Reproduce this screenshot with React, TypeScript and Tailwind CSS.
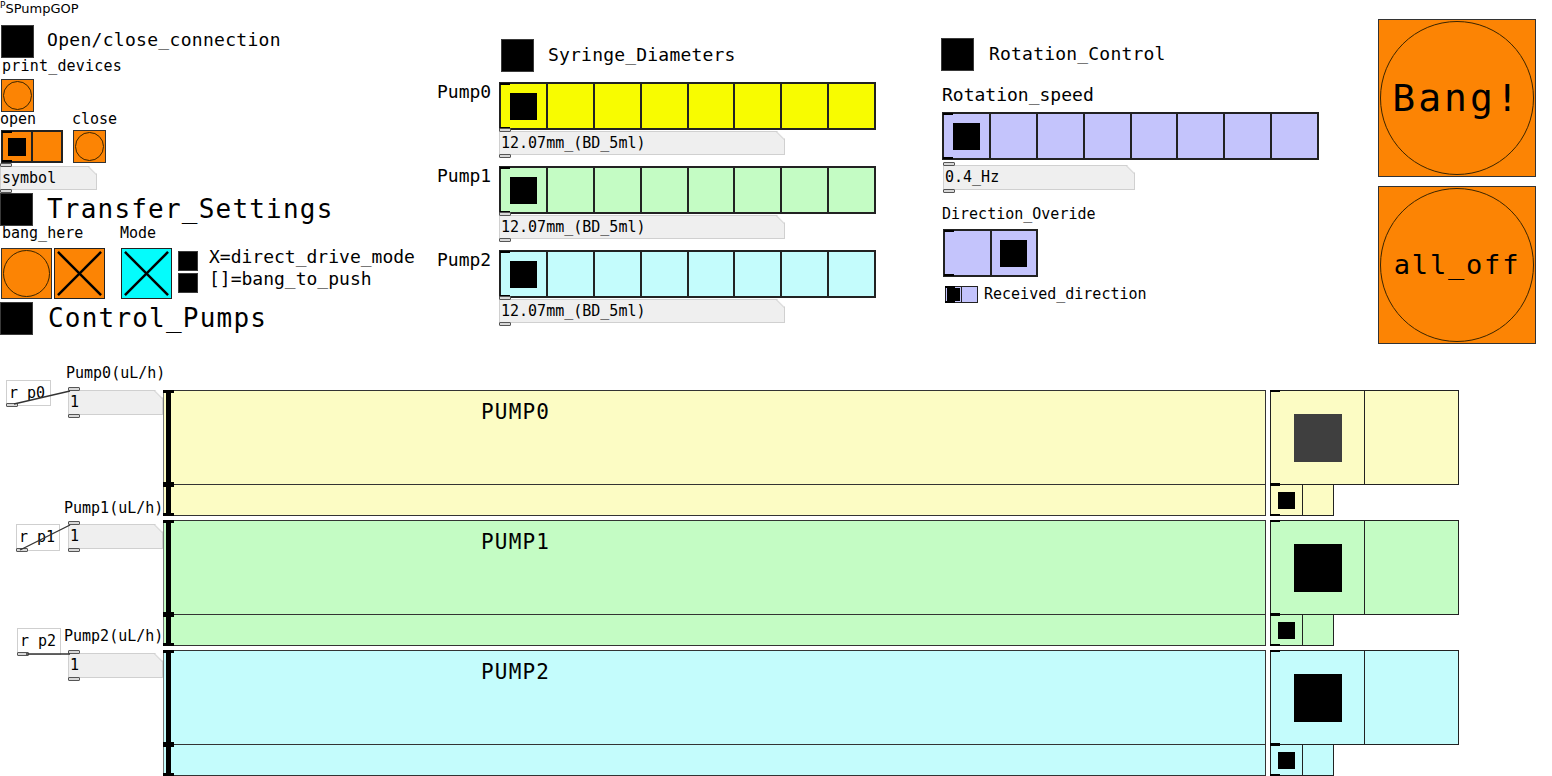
import React from "react";

function Sq({ className = "" }: { className?: string }) {
  return <div className={`shrink-0 bg-black border border-[#3a3a3a] ${className}`} />;
}

function Tab({ bottom }: { bottom?: boolean }) {
  return (
    <div
      className={`absolute left-0 w-[12px] h-[4px] rounded-[1px] border border-[#555] bg-[#d8d8d8] ${
        bottom ? "-bottom-[3px]" : "-top-[3px]"
      }`}
    />
  );
}

// gray atom box (symbol / number) with the cut corner
function Atom({ className, children }: { className: string; children: React.ReactNode }) {
  return (
    <div className={`relative shrink-0 flex items-center ${className}`}>
      <div className="absolute inset-0 border border-[#d0d0d0] bg-[#efefef] [clip-path:polygon(0_0,calc(100%_-_8px)_0,100%_8px,100%_100%,0_100%)]" />
      <svg className="absolute right-0 top-0 w-[9px] h-[9px]" viewBox="0 0 9 9">
        <line x1="0" y1="0.5" x2="8.5" y2="9" stroke="#d0d0d0" />
      </svg>
      <span className="relative pl-[2px] text-[15px] leading-none">{children}</span>
      <Tab />
      <Tab bottom />
    </div>
  );
}

function Radio({
  n,
  sel,
  className,
  knob,
  thick,
}: {
  n: number;
  sel: number;
  className: string;
  knob: string;
  thick?: boolean;
}) {
  return (
    <div className={`relative shrink-0 flex border-[#222] ${thick ? "border-2" : "border"} ${className}`}>
      {Array.from({ length: n }, (_, i) => (
        <div
          key={i}
          className={`flex-1 flex items-center justify-center border-[#222] first:border-l-0 ${
            thick ? "border-l-2" : "border-l"
          }`}
        >
          {i === sel && <div className={knob} />}
        </div>
      ))}
      <div className="absolute -left-px -top-px w-[10px] h-[2px] bg-black" />
      <div className="absolute -left-px -bottom-px w-[10px] h-[2px] bg-black" />
    </div>
  );
}

function Bang({ className, children }: { className: string; children?: React.ReactNode }) {
  return (
    <div className={`relative shrink-0 bg-[#fc8404] border border-[#333] flex items-center justify-center ${className}`}>
      <div className="absolute inset-[1px] rounded-full border border-[#3a2400]" />
      {children && <span className="relative">{children}</span>}
    </div>
  );
}

function Toggle({ className }: { className: string }) {
  return (
    <div className={`relative shrink-0 border border-[#222] ${className}`}>
      <svg className="absolute inset-0 w-full h-full" viewBox="0 0 50 50">
        <line x1="3" y1="3" x2="47" y2="47" stroke="black" strokeWidth="2.5" />
        <line x1="47" y1="3" x2="3" y2="47" stroke="black" strokeWidth="2.5" />
      </svg>
    </div>
  );
}

function Slider({ className, children }: { className: string; children?: React.ReactNode }) {
  return (
    <div className={`relative border border-[#333] border-l-[#777] ${className}`}>
      <div className="absolute left-[2px] -top-px -bottom-px w-[5px] bg-black" />
      <div className="absolute -left-px -top-px w-[11px] h-[3px] bg-black" />
      <div className="absolute -left-px -bottom-px w-[11px] h-[3px] bg-black" />
      {children}
    </div>
  );
}

function Recv({ className, children }: { className: string; children: React.ReactNode }) {
  return (
    <div className={`absolute flex items-center border border-[#cfcfcf] bg-white pl-[2px] text-[15px] leading-none ${className}`}>
      {children}
      <div className="absolute -left-px -bottom-[2px] w-[12px] h-[4px] rounded-[1px] border border-[#555] bg-[#d8d8d8]" />
    </div>
  );
}

function PumpRow({
  bg,
  label,
  knob,
  left,
}: {
  bg: string;
  label: string;
  knob: string;
  left: React.ReactNode;
}) {
  return (
    <div className="flex h-[126px]">
      <div className="relative w-[163px] shrink-0">{left}</div>
      <div className="w-[1103px] shrink-0 flex flex-col">
        <Slider className={`h-[95px] ${bg}`}>
          <span className="absolute left-[317px] top-[9px] text-[21px] leading-[24px] tracking-[1.2px]">{label}</span>
        </Slider>
        <Slider className={`h-[32px] -mt-px ${bg}`} />
      </div>
      <div className="ml-[4px] flex flex-col">
        <Radio n={2} sel={0} className={`w-[189px] h-[95px] ${bg}`} knob={`w-[48px] h-[48px] ${knob}`} />
        <Radio n={2} sel={0} className={`w-[64px] h-[32px] -mt-px ${bg}`} knob="w-[17px] h-[17px] bg-black" />
      </div>
    </div>
  );
}

function SyringeGroup({ name, bg }: { name: string; bg: string }) {
  return (
    <div className="flex mb-[11px]">
      <div className="w-[62px] shrink-0 text-[18px] leading-[22px] -mt-px">{name}</div>
      <div className="flex flex-col">
        <Radio n={8} sel={0} thick className={`w-[377px] h-[48px] ${bg}`} knob="w-[27px] h-[27px] bg-black" />
        <Atom className="w-[286px] h-[24px] mt-[1px]">12.07mm_(BD_5ml)</Atom>
      </div>
    </div>
  );
}

export default function App() {
  return (
    <div className="relative w-[1552px] h-[776px] overflow-hidden bg-white text-black font-['DejaVu_Sans_Mono',monospace]">
      {/* top controls */}
      <div className="flex h-[345px]">
        {/* left column */}
        <div className="w-[437px] shrink-0 flex flex-col">
          <div className="h-[25px] flex items-start font-['DejaVu_Sans',sans-serif]">
            <span className="text-[9px] leading-[10px]">P</span>
            <span className="text-[13px] leading-[16px] mt-[1px]">SPumpGOP</span>
          </div>
          <div className="h-[33px] flex items-center">
            <Sq className="w-[33px] h-[33px] ml-[1px]" />
            <span className="ml-[13px] -mt-[3px] text-[18px] leading-[22px] tracking-[0.3px]">Open/close_connection</span>
          </div>
          <div className="h-[21px] pl-[2px] text-[15px] leading-[15px] tracking-[0.2px] pt-[1px]">print_devices</div>
          <div className="h-[33px] flex">
            <Bang className="w-[33px] h-[33px] ml-[1px]" />
          </div>
          <div className="h-[18px] flex text-[15px] leading-[15px]">
            <span className="w-[72px]">open</span>
            <span>close</span>
          </div>
          <div className="h-[33px] flex">
            <Radio n={2} sel={0} thick className="w-[62px] h-[33px] ml-[1px] bg-[#fc8404]" knob="w-[18px] h-[18px] bg-black" />
            <Bang className="w-[33px] h-[33px] ml-[10px]" />
          </div>
          <Atom className="w-[97px] h-[24px] mt-[3px]">symbol</Atom>
          <div className="h-[33px] mt-[3px] flex items-center">
            <Sq className="w-[33px] h-[33px]" />
            <span className="ml-[14px] text-[26px] leading-[33px] tracking-[1.2px]">Transfer_Settings</span>
          </div>
          <div className="h-[22px] flex text-[15px] leading-[15px] pl-[2px]">
            <span className="w-[118px]">bang_here</span>
            <span>Mode</span>
          </div>
          <div className="h-[51px] flex">
            <Bang className="w-[51px] h-[51px] ml-[1px]" />
            <div className="relative ml-[2px] w-[51px] h-[51px] bg-[#fc8404]">
              <Toggle className="w-[51px] h-[51px]" />
            </div>
            <div className="relative ml-[16px] w-[51px] h-[51px] bg-[#04fcfc]">
              <Toggle className="w-[51px] h-[51px]" />
            </div>
            <div className="ml-[6px] pt-[3px] flex flex-col gap-[2px]">
              <Sq className="w-[20px] h-[20px]" />
              <Sq className="w-[20px] h-[20px]" />
            </div>
            <div className="ml-[11px] -mt-[2px] flex flex-col text-[18px] leading-[22px]">
              <span>X=direct_drive_mode</span>
              <span>[]=bang_to_push</span>
            </div>
          </div>
          <div className="h-[33px] mt-[3px] flex items-center">
            <Sq className="w-[33px] h-[33px]" />
            <span className="ml-[15px] text-[26px] leading-[33px] tracking-[1.2px]">Control_Pumps</span>
          </div>
        </div>

        {/* syringe diameters */}
        <div className="w-[504px] shrink-0 flex flex-col">
          <div className="mt-[39px] h-[33px] flex items-center">
            <Sq className="w-[33px] h-[33px] ml-[64px]" />
            <span className="ml-[14px] -mt-[2px] text-[18px] leading-[22px] tracking-[0.2px]">Syringe_Diameters</span>
          </div>
          <div className="mt-[10px] flex flex-col">
            <SyringeGroup name="Pump0" bg="bg-[#f8fc00]" />
            <SyringeGroup name="Pump1" bg="bg-[#c4fcc4]" />
            <SyringeGroup name="Pump2" bg="bg-[#c4fcfc]" />
          </div>
        </div>

        {/* rotation */}
        <div className="w-[437px] shrink-0 flex flex-col">
          <div className="mt-[38px] h-[33px] flex items-center">
            <Sq className="w-[33px] h-[33px]" />
            <span className="ml-[15px] -mt-[2px] text-[18px] leading-[22px] tracking-[0.2px]">Rotation_Control</span>
          </div>
          <div className="mt-[13px] h-[22px] pl-[1px] text-[18px] leading-[22px]">Rotation_speed</div>
          <Radio n={8} sel={0} thick className="w-[377px] h-[48px] mt-[6px] ml-[1px] bg-[#c4c4fc]" knob="w-[27px] h-[27px] bg-black" />
          <Atom className="w-[192px] h-[25px] mt-[5px] ml-[2px]">0.4_Hz</Atom>
          <div className="mt-[15px] h-[18px] pl-[1px] text-[15px] leading-[18px]">Direction_Overide</div>
          <Radio n={2} sel={1} thick className="w-[95px] h-[48px] mt-[6px] ml-[2px] bg-[#c4c4fc]" knob="w-[27px] h-[27px] bg-black" />
          <div className="mt-[9px] flex items-center">
            <Radio n={2} sel={0} className="w-[33px] h-[17px] ml-[4px] bg-[#c4c4fc]" knob="w-[13px] h-[13px] bg-black" />
            <span className="ml-[6px] text-[15px] leading-[17px]">Received_direction</span>
          </div>
        </div>

        {/* big bangs */}
        <div className="flex flex-col">
          <Bang className="w-[158px] h-[158px] mt-[19px] text-[38px] tracking-[3px]">Bang!</Bang>
          <Bang className="w-[158px] h-[158px] mt-[9px] text-[27px] tracking-[1.8px]">all_off</Bang>
        </div>
      </div>

      {/* pump sliders */}
      <div className="pt-[45px] flex flex-col gap-[4px]">
        <PumpRow
          bg="bg-[#fcfcc4]"
          label="PUMP0"
          knob="bg-[#3f3f3f]"
          left={
            <>
              <span className="absolute left-[66px] -top-[26px] text-[15px] leading-[18px]">Pump0(uL/h)</span>
              <Recv className="left-[6px] -top-[10px] w-[45px] h-[26px]">r p0</Recv>
              <div className="absolute left-[68px] top-0">
                <Atom className="w-[95px] h-[25px]">1</Atom>
              </div>
              <svg className="absolute left-0 top-0 w-[163px] h-[126px] overflow-visible">
                <line x1="14" y1="14" x2="70" y2="1" stroke="#333" strokeWidth="1.3" />
              </svg>
            </>
          }
        />
        <PumpRow
          bg="bg-[#c4fcc4]"
          label="PUMP1"
          knob="bg-black"
          left={
            <>
              <span className="absolute left-[64px] -top-[21px] text-[15px] leading-[18px]">Pump1(uL/h)</span>
              <Recv className="left-[16px] top-[4px] w-[44px] h-[27px]">r p1</Recv>
              <div className="absolute left-[68px] top-[4px]">
                <Atom className="w-[95px] h-[25px]">1</Atom>
              </div>
              <svg className="absolute left-0 top-0 w-[163px] h-[126px] overflow-visible">
                <line x1="20" y1="30" x2="70" y2="5" stroke="#333" strokeWidth="1.3" />
              </svg>
            </>
          }
        />
        <PumpRow
          bg="bg-[#c4fcfc]"
          label="PUMP2"
          knob="bg-black"
          left={
            <>
              <Recv className="left-[17px] -top-[22px] w-[44px] h-[27px]">r p2</Recv>
              <span className="absolute left-[64px] -top-[23px] text-[15px] leading-[18px]">Pump2(uL/h)</span>
              <div className="absolute left-[68px] top-[3px]">
                <Atom className="w-[95px] h-[25px]">1</Atom>
              </div>
              <svg className="absolute left-0 top-0 w-[163px] h-[126px] overflow-visible">
                <line x1="26" y1="4" x2="70" y2="4" stroke="#333" strokeWidth="1.3" />
              </svg>
            </>
          }
        />
      </div>
    </div>
  );
}
